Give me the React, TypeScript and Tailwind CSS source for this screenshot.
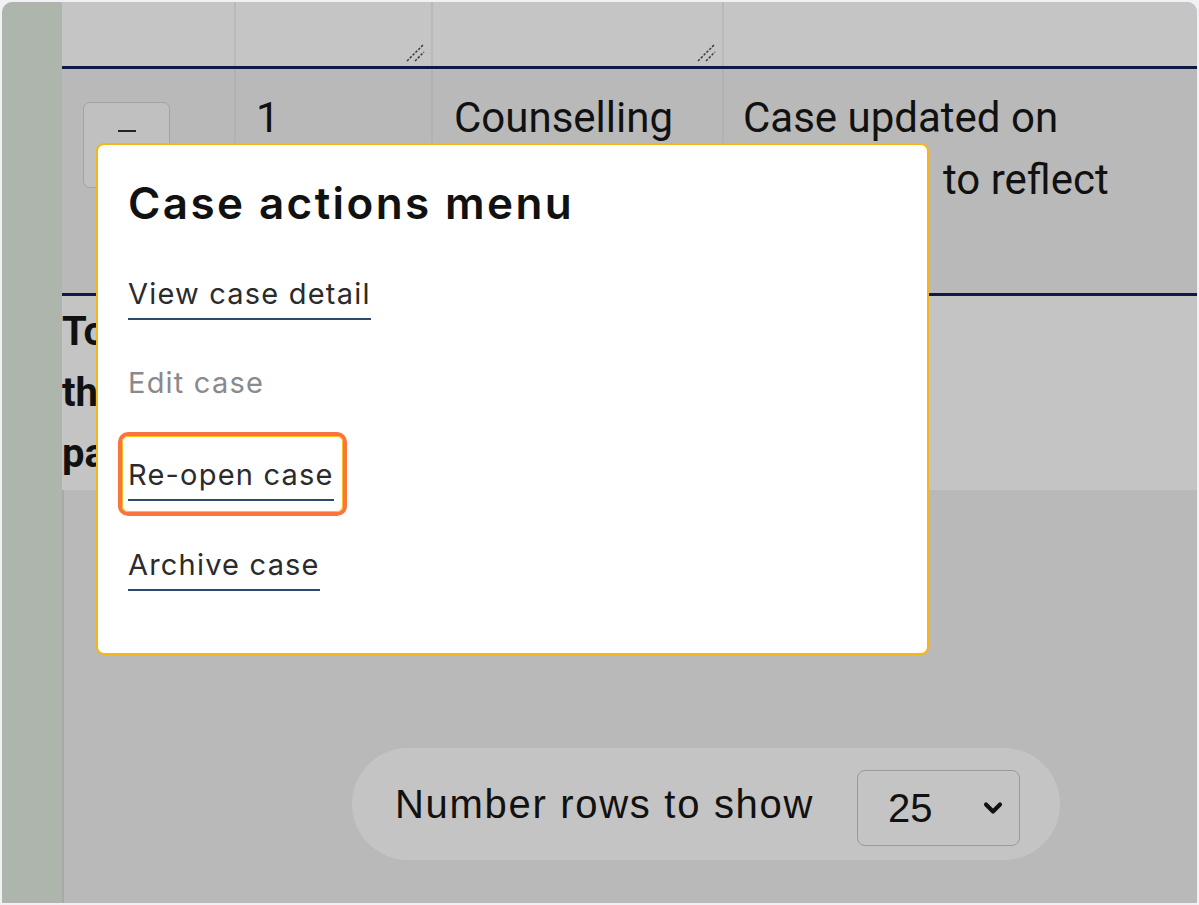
import { ChevronDown } from "lucide-react";

function ResizeHandle() {
  return (
    <svg className="absolute right-[5px] bottom-[3px]" width="22" height="22" viewBox="0 0 22 22">
      <line x1="3" y1="20" x2="19" y2="4" stroke="#3a3a3a" strokeWidth="1.5" strokeDasharray="2.5 1.5" />
      <line x1="11" y1="20" x2="20" y2="11" stroke="#3a3a3a" strokeWidth="1.5" strokeDasharray="2.5 1.5" />
    </svg>
  );
}

export default function App() {
  return (
    <div className="w-[1199px] h-[905px] bg-[#f1f1f5] p-[2px] overflow-hidden">
      <div className="relative h-full flex rounded-t-[10px] overflow-hidden">
        {/* Left strip */}
        <div className="w-[60px] bg-[#aeb5ad]" />

        {/* Main */}
        <div className="flex-1 flex flex-col bg-[#b9b9b9] font-['Roboto',sans-serif] text-[#111]">
          {/* Table header */}
          <div className="h-[64px] flex bg-[#c5c5c5]">
            <div className="w-[174px] border-r-2 border-[#b9b9b9]" />
            <div className="relative w-[197px] border-r-2 border-[#b9b9b9]">
              <ResizeHandle />
            </div>
            <div className="relative w-[291px] border-r-2 border-[#b9b9b9]">
              <ResizeHandle />
            </div>
            <div className="flex-1" />
          </div>
          <div className="h-[3px] bg-[#0b1b46]" />

          {/* Table row */}
          <div className="h-[224px] flex text-[42px] leading-[62px]">
            <div className="w-[174px] border-r-2 border-[#b2b2b2] pl-[21px] pt-[33px]">
              <div className="w-[87px] h-[86px] rounded-[7px] border-[1.5px] border-[#a3a3a3] bg-[#c0c0c0] flex justify-center pt-[27px]">
                <div className="w-[18px] h-[2px] bg-[#222]" />
              </div>
            </div>
            <div className="w-[197px] border-r-2 border-[#b2b2b2] pl-[20px] pt-[18px]">1</div>
            <div className="w-[291px] border-r-2 border-[#b2b2b2] pl-[21px] pt-[18px]">Counselling</div>
            <div className="flex-1 pl-[19px] pt-[18px]">
              <div>Case updated on</div>
              <div>
                <span className="inline-block w-[200px]">12/03/24</span>to reflect
              </div>
              <div>changes.</div>
            </div>
          </div>
          <div className="h-[3px] bg-[#0b1b46]" />

          {/* Help text */}
          <div className="h-[194px] bg-[#c4c4c4] pt-[5px] text-[40px] leading-[61px] font-bold">
            <div>To change a case, open the</div>
            <div>the actions menu for it on this</div>
            <div>page.</div>
          </div>

          {/* Lower area */}
          <div className="flex-1 border-l-2 border-[#a9a9a9] pl-[288px] pt-[258px]">
            <div className="w-[708px] h-[112px] rounded-full bg-[#c4c4c4] flex items-center pl-[43px] gap-[43px] font-['Liberation_Sans',Arial,sans-serif]">
              <span className="text-[40px] text-[#111] tracking-[1.7px]">Number rows to show</span>
              <div className="mt-[8px] w-[163px] h-[76px] rounded-[8px] border-[1.5px] border-[#9a9a9a] flex items-center justify-between pl-[30px] pr-[12px]">
                <span className="text-[40px] text-[#111]">25</span>
                <ChevronDown className="w-[28px] h-[28px] text-[#111]" strokeWidth={3.5} />
              </div>
            </div>
          </div>
        </div>

        {/* Case actions modal */}
        <div className="absolute left-[94px] top-[141px] w-[833px] h-[512px] bg-white border-2 border-[#f7b617] rounded-[8px] pl-[30px] pt-[36px] font-['Inter',sans-serif]">
          <h2 className="text-[44px] leading-[44px] font-semibold text-[#111] tracking-[2.4px]">Case actions menu</h2>
          <div className="mt-[54px] flex flex-col items-start gap-[48px] text-[29px] leading-[29px] tracking-[1.2px]">
            <a className="inline-block pb-[10px] border-b-2 border-[#2c4a70] text-[#2b2b2b]">View case detail</a>
            <span className="inline-block pb-[10px] border-b-2 border-transparent text-[#8a8a8a]">Edit case</span>
            <span className="relative inline-block mt-[3px]">
              <span className="absolute -left-[10px] -right-[13px] -top-[28px] -bottom-[15px] rounded-[10px] border-[4px] border-[#fb7440]">
                <span className="absolute inset-0 rounded-[6px] border-[1.5px] border-[#f9c21a]" />
              </span>
              <a className="relative inline-block pb-[10px] border-b-2 border-[#2c4a70] text-[#2b2b2b]">Re-open case</a>
            </span>
            <a className="inline-block pb-[10px] border-b-2 border-[#2c4a70] text-[#2b2b2b] mt-[1px]">Archive case</a>
          </div>
        </div>
      </div>
    </div>
  );
}
